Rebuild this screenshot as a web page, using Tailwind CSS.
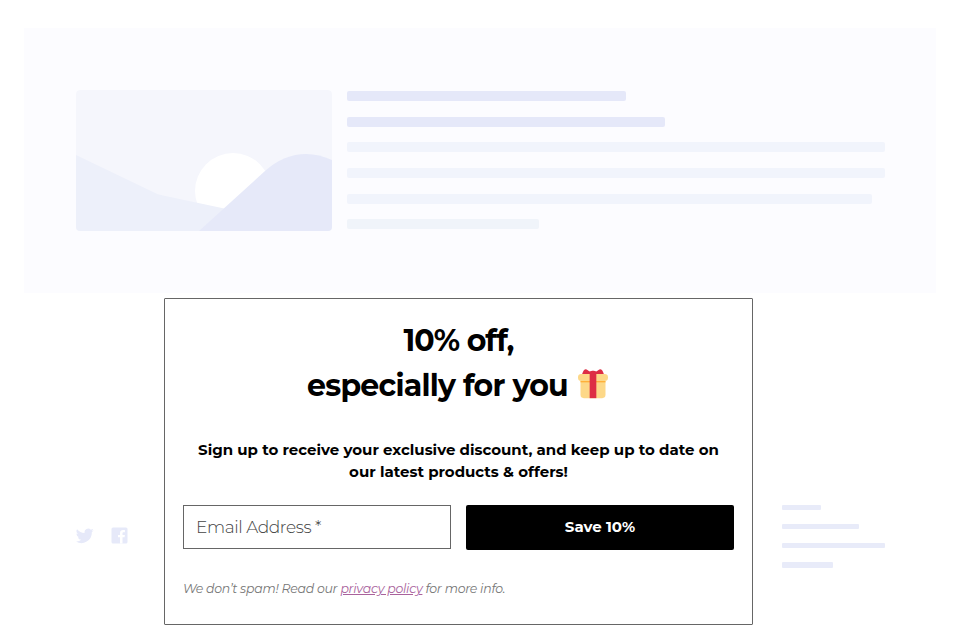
<!DOCTYPE html>
<html lang="en">
<head>
<meta charset="utf-8">
<title>10% off, especially for you</title>
<script src="https://cdn.jsdelivr.net/npm/@tailwindcss/browser@4"></script>
</head>
<body class="h-[633px] w-[960px] overflow-hidden bg-white font-['Montserrat','Inter',sans-serif] text-black">
  <!-- Page preview -->
  <section class="mx-6 mt-7 flex h-[265px] gap-[15px] bg-[#fcfcff] pt-[61.500px] pl-[52px]">
    <svg class="h-[141px] w-64 shrink-0 rounded-[4px]" viewBox="0 0 256 141">
      <rect width="256" height="141" rx="4" fill="#f5f6fc"/>
      <circle cx="157" cy="101" r="38" fill="#fff"/>
      <path d="M0 65 L75 101 Q80 104 87 105.500 L160 121 V141 H0Z" fill="#edf0fa"/>
      <path d="M123 141 L189 81 Q208 64 230 64 Q243 64 256 70 V141Z" fill="#e6e9f9"/>
    </svg>
    <div class="flex flex-col gap-[15.7px] pt-[1.500px]">
      <div class="h-[10px] w-[279px] rounded-[2px] bg-[#e5e8f9]"></div>
      <div class="h-[10px] w-[317.500px] rounded-[2px] bg-[#e5e8f9]"></div>
      <div class="h-[10px] w-[538px] rounded-[2px] bg-[#f1f4fc]"></div>
      <div class="h-[10px] w-[538px] rounded-[2px] bg-[#f1f4fc]"></div>
      <div class="h-[10px] w-[525px] rounded-[2px] bg-[#f1f4fc]"></div>
      <div class="h-[10px] w-[192px] rounded-[2px] bg-[#f0f4fa]"></div>
    </div>
  </section>

  <footer class="flex pt-[5px] pl-[76px]">
    <div class="flex w-[88px] shrink-0 gap-[17px] pt-[229px]">
      <svg class="h-[17px] w-[18px]" viewBox="0 2 24 20" fill="#e6e9f9"><path d="M23.600 4.900a9.700 9.700 0 0 1-2.800.8 4.900 4.900 0 0 0 2.100-2.700c-.9.500-2 1-3.100 1.200A4.900 4.900 0 0 0 11.500 8.700 13.900 13.900 0 0 1 1.400 3.500a4.900 4.900 0 0 0 1.500 6.500 4.900 4.900 0 0 1-2.200-.6 4.900 4.900 0 0 0 3.900 4.900 4.900 4.900 0 0 1-2.200.1 4.900 4.900 0 0 0 4.600 3.400A9.900 9.900 0 0 1-.3 19.800a13.900 13.900 0 0 0 21.400-12.400c1-.7 1.800-1.500 2.500-2.500z"/></svg>
      <svg class="h-[17px] w-[17px]" viewBox="0 0 17 17"><rect x=".5" y=".5" width="16" height="16" rx="1.500" fill="#e6e9f9"/><path d="M9 16.500V10.300H7V7.900h2V6.200C9 4.100 10.200 3 12.200 3h1.700v2.300h-1.200c-.9 0-1.200.4-1.200 1.200v1.400h2.400l-.3 2.400h-2.100v6.200z" fill="#fff"/></svg>
    </div>

    <!-- Sign-up form -->
    <form class="h-[327px] w-[589px] shrink-0 rounded-[1px] border border-[#666] bg-white px-[18px] pt-[19px]">
      <h1 class="flex flex-col items-center text-[30px] leading-[45px] font-bold whitespace-nowrap">
        <span class="tracking-[-0.95px]">10% off,</span>
        <span class="flex items-center gap-[10px] pr-[2px]"><span class="tracking-[-0.75px]">especially for you</span>
          <svg class="-mt-[3px] h-[30px] w-[30px]" viewBox="0 0 36 36">
            <path d="M33 31a4 4 0 0 1-4 4H7a4 4 0 0 1-4-4V14h30z" fill="#fdd888"/>
            <rect x="0" y="6" width="36" height="8.500" rx="4" fill="#fdd888"/>
            <path d="M3 14.500h30v1.500H3z" fill="#ffac33"/>
            <path d="M14 3h8v32h-8z" fill="#dd2e44"/>
            <path d="M5 6C6 3 7 .3 9 .3c2 0 3.500 2 5.500 3C16 1.800 20 1.800 21.500 3.300c2-1 3.500-3 5.500-3 2 0 3 2.700 4 5.700z" fill="#dd2e44"/>
          </svg>
        </span>
      </h1>
      <p class="mt-[30.500px] flex flex-col items-center text-[15px] leading-[22.500px] font-bold whitespace-nowrap">
        <span>Sign up to receive your exclusive discount, and keep up to date on</span>
        <span>our latest products &amp; offers!</span>
      </p>
      <div class="mt-[21.500px] flex gap-[15px]">
        <div class="flex h-11 w-[268px] items-center border border-[#666] pt-px pl-3 text-[17px] font-light tracking-[-0.4px] text-[#444]"><span>Email Address *</span></div>
        <button type="button" class="h-[45px] w-[268px] rounded-[2px] bg-black text-[15px] font-bold text-white"><span>Save 10%</span></button>
      </div>
      <p class="mt-[29px] text-[12.500px] leading-5 tracking-[-0.26px] whitespace-nowrap text-[#777] italic"><span>We don’t spam! Read our <a class="text-[#a9629c] underline">privacy policy</a> for more info.</span></p>
    </form>

    <div class="ml-[29px] flex flex-col gap-[14px] pt-[206.500px]">
      <div class="h-[5.300px] w-[39px] rounded-[1px] bg-[#e8ebf9]"></div>
      <div class="h-[5.300px] w-[77px] rounded-[1px] bg-[#e8ebf9]"></div>
      <div class="h-[5.300px] w-[103px] rounded-[1px] bg-[#e8ebf9]"></div>
      <div class="h-[5.300px] w-[51px] rounded-[1px] bg-[#e8ebf9]"></div>
    </div>
  </footer>
</body>
</html>
